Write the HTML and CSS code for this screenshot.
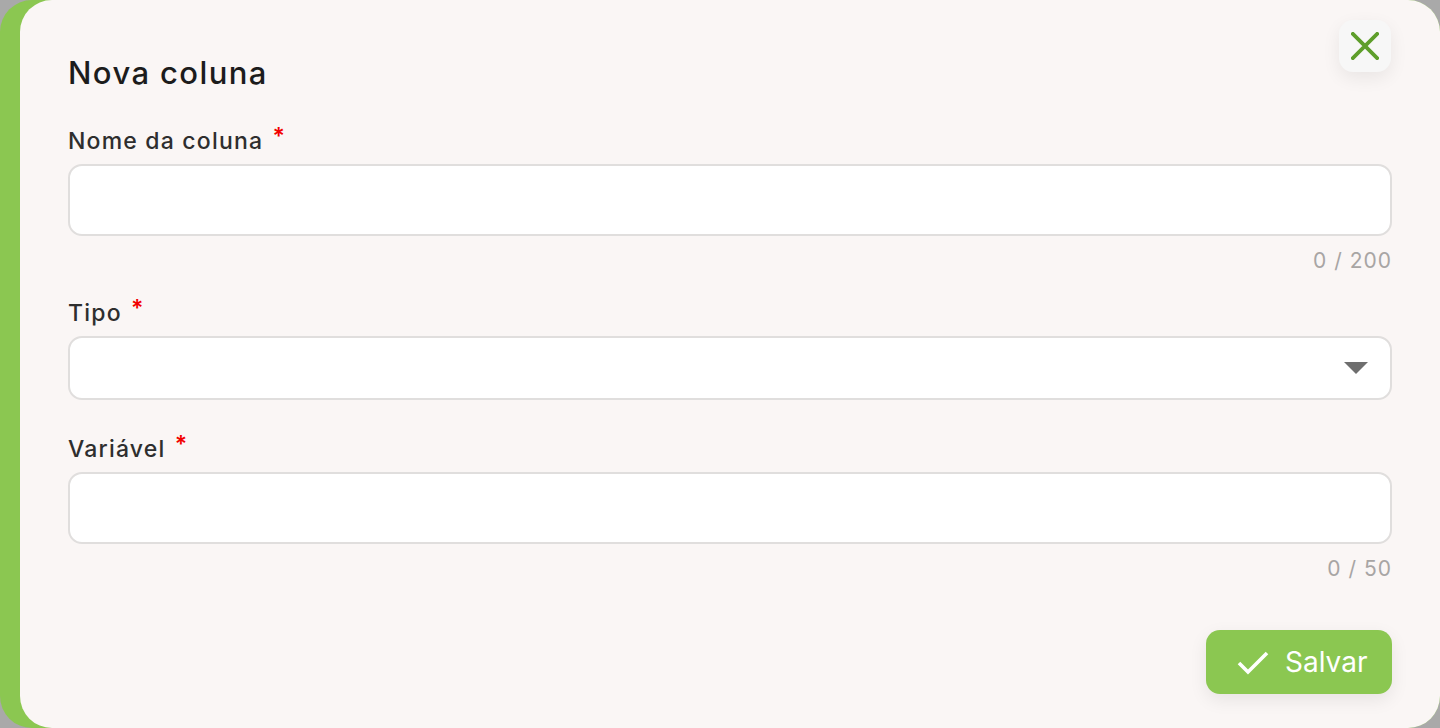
FILE: index.html
```html
<!DOCTYPE html>
<html lang="pt">
<head>
<meta charset="utf-8">
<link rel="stylesheet" href="styles.css">
</head>
<body>
<div class="modal">
  <div class="panel">
    <button class="close" aria-label="Fechar">
      <svg width="30" height="30" viewBox="0 0 30 30"><path d="M2 2 L28 28 M28 2 L2 28" stroke="#5e9e2b" stroke-width="4" stroke-linecap="square" fill="none"/></svg>
    </button>
    <h1 class="title">Nova coluna</h1>
    <div class="field first">
      <label class="label">Nome da coluna <span class="req">*</span></label>
      <div class="input tall"></div>
      <div class="counter">0 / 200</div>
    </div>
    <div class="field field-select">
      <label class="label">Tipo <span class="req">*</span></label>
      <div class="input select"><span class="caret"></span></div>
    </div>
    <div class="field last">
      <label class="label">Variável <span class="req">*</span></label>
      <div class="input tall"></div>
      <div class="counter">0 / 50</div>
    </div>
    <div class="actions">
      <button class="save">
        <svg width="34" height="26" viewBox="0 0 34 26"><path d="M3 13 L12 22 L31 3" stroke="#ffffff" stroke-width="3.6" fill="none" stroke-linecap="butt"/></svg>
        <span>Salvar</span>
      </button>
    </div>
  </div>
</div>
</body>
</html>
```

FILE: styles.css
```css
html, body {
  margin: 0;
  padding: 0;
}
body {
  background: #a9a9a9;
  font-family: Inter, "Noto Sans", sans-serif;
  width: 1440px;
  height: 728px;
  overflow: hidden;
}
.modal {
  width: 1440px;
  height: 728px;
  background: #8bc751;
  border-radius: 32px;
  display: flex;
}
.panel {
  position: relative;
  flex: 1;
  margin-left: 20px;
  background: #faf6f5;
  border-radius: 32px;
  padding: 55px 48px 0 48px;
  display: flex;
  flex-direction: column;
}
.close {
  position: absolute;
  top: 20px;
  right: 49px;
  width: 52px;
  height: 52px;
  border: none;
  border-radius: 14px;
  background: #f7f7f7;
  box-shadow: 0 6px 18px rgba(0, 0, 0, 0.07);
  display: flex;
  align-items: center;
  justify-content: center;
  padding: 0;
}
.close svg {
  width: 28px;
  height: 28px;
}
.title {
  margin: 0;
  font-size: 31px;
  line-height: 36px;
  font-weight: 500;
  color: #1c1c1c;
  letter-spacing: 1.4px;
}
.field {
  display: flex;
  flex-direction: column;
}
.field.first {
  margin-top: 36px;
}
.field.field-select {
  margin-top: 26px;
}
.field.last {
  margin-top: 35px;
}
.label {
  font-size: 23px;
  line-height: 28px;
  font-weight: 500;
  color: #2e2e2e;
  letter-spacing: 1.2px;
  margin-bottom: 9px;
}
.req {
  color: #f20000;
  position: relative;
  top: -5px;
  margin-left: 2px;
  font-weight: 600;
}
.input {
  box-sizing: border-box;
  background: #ffffff;
  border: 2px solid #e0dedd;
  border-radius: 14px;
  height: 72px;
}
.select {
  height: 64px;
  display: flex;
  align-items: center;
  justify-content: flex-end;
  padding-right: 22px;
}
.caret {
  width: 0;
  height: 0;
  border-left: 12px solid transparent;
  border-right: 12px solid transparent;
  border-top: 12px solid #6e6e6e;
}
.counter {
  align-self: flex-end;
  font-size: 21px;
  line-height: 24px;
  color: #a8a5a4;
  margin-top: 13px;
  letter-spacing: 1px;
}
.actions {
  display: flex;
  justify-content: flex-end;
  margin-top: 49px;
}
.save {
  height: 64px;
  width: 186px;
  border: none;
  border-radius: 14px;
  background: #8bc751;
  color: #ffffff;
  font-family: Inter, "Noto Sans", sans-serif;
  font-size: 28px;
  display: flex;
  align-items: center;
  gap: 15px;
  padding: 0 0 0 30px;
  box-shadow: 0 6px 18px rgba(0, 0, 0, 0.08);
}
.save svg {
  width: 34px;
  height: 26px;
  margin-top: 2px;
}
```
